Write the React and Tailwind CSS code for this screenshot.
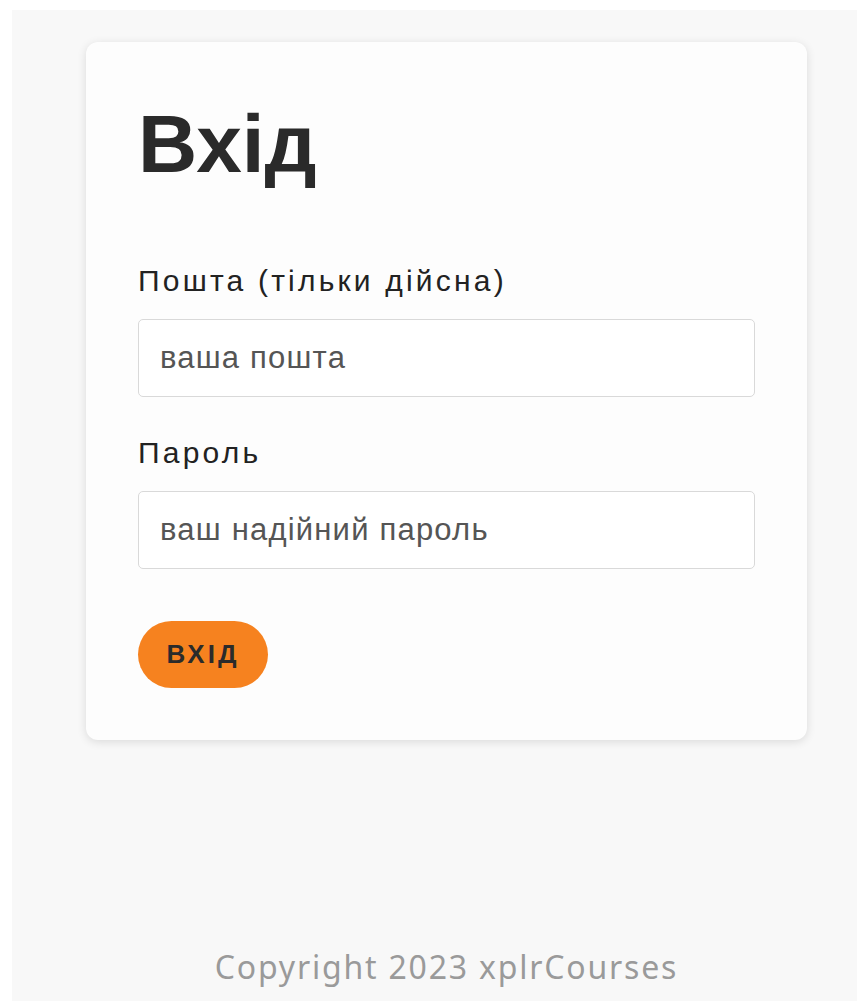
import React from 'react';

function Field({ label, placeholder, type = 'text' }) {
  return (
    <div className="flex flex-col">
      <label className="text-[30px] leading-[34px] text-[#222] tracking-[3.2px]">{label}</label>
      <input
        type={type}
        placeholder={placeholder}
        className="mt-[21px] h-[78px] w-full rounded-[5px] border border-[#d9d9d9] bg-white px-[21px] text-[31px] tracking-[1.2px] text-[#333] placeholder:text-[#555] outline-none"
      />
    </div>
  );
}

export default function App() {
  return (
    <div className="min-h-[1001px] bg-white pt-[10px] pl-[12px] font-['Liberation_Sans',Arial,sans-serif]">
      <div className="flex min-h-[991px] flex-col bg-[#f8f8f8] pt-[32px] pl-[74px] pr-[50px]">
        <main className="flex flex-col rounded-[12px] bg-[#fdfdfd] px-[52px] pt-[62px] pb-[52px] shadow-[0_2px_10px_rgba(0,0,0,0.12)]">
          <h1 className="text-[82px] font-bold leading-[80px] text-[#2a2a2a]">Вхід</h1>

          <form className="mt-[80px] flex flex-col gap-[39px]" onSubmit={(e) => e.preventDefault()}>
            <Field label="Пошта (тільки дійсна)" placeholder="ваша пошта" type="email" />
            <Field label="Пароль" placeholder="ваш надійний пароль" type="password" />
            <div className="pt-[13px]">
              <button
                type="submit"
                className="h-[67px] w-[130px] rounded-full bg-[#f6821f] text-[26px] font-bold tracking-[3px] text-[#2b2b2b]"
              >
                ВХІД
              </button>
            </div>
          </form>
        </main>

        <footer className="mt-auto flex justify-center pb-[10px] font-['Noto_Sans',sans-serif] text-[32px] tracking-[1.8px] text-[#9a9a9a]">
          Copyright 2023 xplrCourses
        </footer>
      </div>
    </div>
  );
}
